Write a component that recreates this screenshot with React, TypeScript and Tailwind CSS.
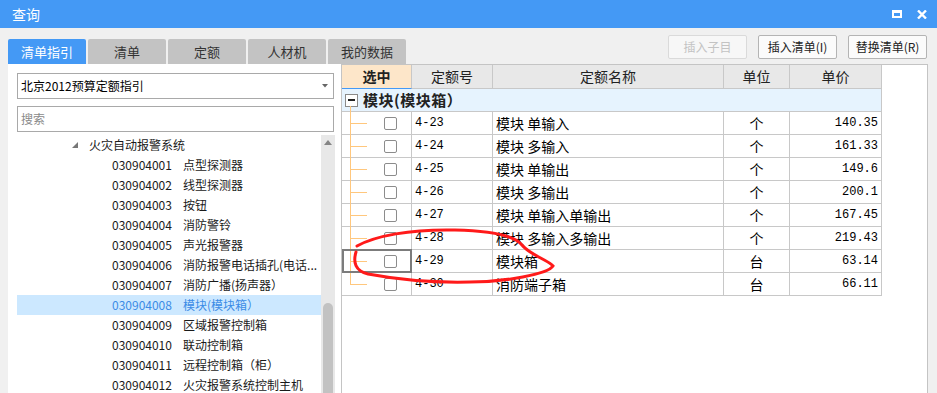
import React from "react";

const CJK = '"Noto Sans CJK SC", "Noto Sans", sans-serif';
const MONO = '"Liberation Mono", "Noto Sans CJK SC", monospace';

const tabs = ["清单指引", "清单", "定额", "人材机", "我的数据"];

const treeItems: [string, string][] = [
  ["030904001", "点型探测器"],
  ["030904002", "线型探测器"],
  ["030904003", "按钮"],
  ["030904004", "消防警铃"],
  ["030904005", "声光报警器"],
  ["030904006", "消防报警电话插孔(电话..."],
  ["030904007", "消防广播(扬声器）"],
  ["030904008", "模块(模块箱）"],
  ["030904009", "区域报警控制箱"],
  ["030904010", "联动控制箱"],
  ["030904011", "远程控制箱（柜）"],
  ["030904012", "火灾报警系统控制主机"],
];

const rows: [string, string, string, string][] = [
  ["4-23", "模块 单输入", "个", "140.35"],
  ["4-24", "模块 多输入", "个", "161.33"],
  ["4-25", "模块 单输出", "个", "149.6"],
  ["4-26", "模块 多输出", "个", "200.1"],
  ["4-27", "模块 单输入单输出", "个", "167.45"],
  ["4-28", "模块 多输入多输出", "个", "219.43"],
  ["4-29", "模块箱", "台", "63.14"],
  ["4-30", "消防端子箱", "台", "66.11"],
];

export default function App() {
  return (
    <div
      className="relative w-[937px] h-[393px] bg-[#f0f0f0] flex flex-col overflow-hidden"
      style={{ fontFamily: CJK }}
    >
      {/* Title bar */}
      <div className="h-[28px] shrink-0 bg-[#4499f5] flex items-center justify-between pl-[12px] pr-[10px]">
        <span className="text-white text-[14px] leading-none">查询</span>
        <div className="flex items-center gap-[15px]">
          <div className="w-[10px] h-[8px] border-2 border-t-[3px] border-white" />
          <svg width="10" height="9" viewBox="0 0 10 9">
            <path d="M1 0.5 L9 8.5 M9 0.5 L1 8.5" stroke="white" strokeWidth="2.4" />
          </svg>
        </div>
      </div>

      {/* Toolbar: tabs + buttons */}
      <div className="h-[36px] shrink-0 flex justify-between pl-[8px] pr-[10px]">
        <div className="flex items-end gap-[2px]">
          {tabs.map((t, i) => (
            <div
              key={t}
              className={
                "w-[78px] h-[25px] rounded-t-[2px] flex items-center justify-center text-[13px] " +
                (i === 0 ? "bg-[#4499f5] text-white" : "bg-[#c3c3c3] text-[#333]")
              }
            >
              {t}
            </div>
          ))}
        </div>
        <div className="flex items-start gap-[11px] pt-[7px]">
          <div className="w-[79px] h-[24px] rounded-[2px] border border-[#dadada] bg-[#f7f7f7] text-[#c3c3c3] text-[12px] flex items-center justify-center">
            插入子目
          </div>
          <div className="w-[79px] h-[24px] rounded-[2px] border border-[#b4b4b4] bg-[#fbfbfb] text-[#222] text-[12px] flex items-center justify-center">
            插入清单(I)
          </div>
          <div className="w-[79px] h-[24px] rounded-[2px] border border-[#b4b4b4] bg-[#fbfbfb] text-[#222] text-[12px] flex items-center justify-center">
            替换清单(R)
          </div>
        </div>
      </div>

      {/* Content */}
      <div className="flex-1 flex pl-[8px] pr-[9px] min-h-0">
        {/* Left panel */}
        <div className="w-[333px] bg-white flex flex-col pl-[9px] pr-[6px] min-h-0">
          <div className="mt-[9px] w-[317px] h-[26px] border border-[#a9a9a9] flex items-center justify-between pl-[3px] pr-[5px]">
            <span className="text-[12px] text-black">北京2012预算定额指引</span>
            <svg width="6" height="4" viewBox="0 0 6 4">
              <path d="M0 0 H6 L3 3.5 Z" fill="#666" />
            </svg>
          </div>
          <div className="mt-[7px] w-[317px] h-[26px] border border-[#a9a9a9] flex items-center pl-[3px]">
            <span className="text-[12px] text-[#8a8a8a]">搜索</span>
          </div>
          <div className="mt-[3px] flex-1 flex min-h-0">
            <div className="w-[304px] flex flex-col text-[12px] text-[#1a1a1a]">
              <div className="h-[20px] flex items-center shrink-0">
                <svg className="ml-[55px]" width="6" height="6" viewBox="0 0 6 6">
                  <path d="M6 0 V6 H0 Z" fill="#777" />
                </svg>
                <span className="ml-[11px]">火灾自动报警系统</span>
              </div>
              {treeItems.map(([code, name], i) => {
                const sel = i === 7;
                return (
                  <div
                    key={code}
                    className={
                      "h-[20px] shrink-0 flex items-center whitespace-nowrap " +
                      (sel ? "bg-[#cce8ff] text-[#3b8be6]" : "")
                    }
                  >
                    <span className="ml-[95px] w-[71px]">{code}</span>
                    <span>{name}</span>
                  </div>
                );
              })}
            </div>
            <div className="w-[14px] bg-[#e8e8e8] flex flex-col items-center">
              <svg className="mt-[5px]" width="8" height="5" viewBox="0 0 8 5">
                <path d="M0 5 L4 0 L8 5 Z" fill="#858585" />
              </svg>
              <div className="mt-[158px] w-[10px] flex-1 bg-[#c2c2c2] rounded-t-full" />
            </div>
          </div>
        </div>

        {/* Right panel */}
        <div className="flex-1 bg-white border-l border-t border-r border-[#c4c4c4] flex flex-col">
          <div className="w-[540px] flex flex-col text-[#222]">
            {/* Header */}
            <div className="h-[24px] flex text-[14px]">
              <div className="w-[70px] bg-[#fde6c9] border-r border-[#c8c8c8] border-b border-b-[#4499f5] flex items-center justify-center font-bold">
                选中
              </div>
              <div className="w-[81px] bg-[#e8e8e8] border-r border-b border-[#c8c8c8] flex items-center justify-center">
                定额号
              </div>
              <div className="w-[231px] bg-[#e8e8e8] border-r border-b border-[#c8c8c8] flex items-center justify-center">
                定额名称
              </div>
              <div className="w-[66px] bg-[#e8e8e8] border-r border-b border-[#c8c8c8] flex items-center justify-center">
                单位
              </div>
              <div className="w-[92px] bg-[#e8e8e8] border-r border-b border-[#c8c8c8] flex items-center justify-center">
                单价
              </div>
            </div>
            {/* Group row */}
            <div className="relative h-[23px] bg-[#e6f3fe] border-r border-b border-[#c8c8c8] flex items-center">
              <div className="relative ml-[3px] w-[13px] h-[13px] border border-[#8a8a8a] bg-white flex items-center justify-center">
                <div className="w-[7px] h-[1.5px] bg-[#222]" />
              </div>
              <span className="ml-[5px] text-[15px] font-bold tracking-[0.5px]">模块(模块箱）</span>
              <div className="absolute left-[8px] top-[17px] bottom-[-1px] w-[1px] bg-[#ffc77d]" />
            </div>
            {/* Data rows */}
            {rows.map(([no, name, unit, price], i) => {
              const last = i === rows.length - 1;
              const sel = i === 6;
              return (
                <div key={no} className="h-[23px] flex">
                  <div className="relative w-[70px] border-r border-b border-[#c8c8c8] flex items-center">
                    <div
                      className={
                        "absolute left-[8px] top-0 w-[1px] bg-[#ffc77d] " +
                        (last ? "h-[11px]" : "bottom-[-1px]")
                      }
                    />
                    <div className="absolute left-[8px] top-[11px] w-[17px] h-[1px] bg-[#ffc77d]" />
                    <div className="ml-[42px] w-[13px] h-[13px] rounded-[2px] border border-[#8c8c8c] bg-white" />
                    {sel && (
                      <div className="absolute -top-[1px] -bottom-[1px] left-0 -right-[1px] border-2 border-[#7c7c7c]" />
                    )}
                  </div>
                  <div
                    className="w-[81px] border-r border-b border-[#c8c8c8] flex items-center pl-[3px] text-[12px] text-black"
                    style={{ fontFamily: MONO }}
                  >
                    {no}
                  </div>
                  <div className="w-[231px] border-r border-b border-[#c8c8c8] flex items-center pl-[3px] text-[14px] text-black whitespace-pre">
                    {name}
                  </div>
                  <div className="w-[66px] border-r border-b border-[#c8c8c8] flex items-center justify-center text-[14px] text-black">
                    {unit}
                  </div>
                  <div
                    className="w-[92px] border-r border-b border-[#c8c8c8] flex items-center justify-end pr-[3px] text-[12px] text-black"
                    style={{ fontFamily: MONO }}
                  >
                    {price}
                  </div>
                </div>
              );
            })}
          </div>
        </div>
      </div>

      {/* Red hand-drawn annotation */}
      <svg className="absolute left-0 top-0 pointer-events-none" width="937" height="393" viewBox="0 0 937 393">
        <path
          d="M357 246 C 375 236 410 229 455 230 C 495 231 515 236 522 245 C 530 255 548 260 553 266 C 548 274 505 282 470 282 C 430 283 395 279 368 274 C 355 271 353 262 356 252"
          fill="none"
          stroke="#ff1a1a"
          strokeWidth="3"
          strokeLinecap="round"
        />
      </svg>
    </div>
  );
}
